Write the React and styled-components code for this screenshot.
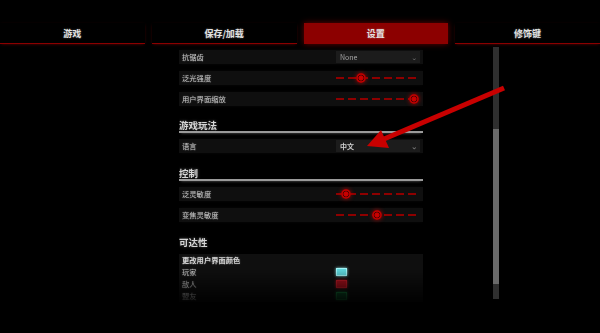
import React from "react";
import styled, { createGlobalStyle } from "styled-components";

const GlobalStyle = createGlobalStyle`
  html, body {
    margin: 0;
    padding: 0;
    background: #000;
  }
  body {
    font-family: "Noto Sans CJK SC", "Noto Sans", sans-serif;
  }
`;

const Screen = styled.div`
  position: relative;
  width: 600px;
  height: 333px;
  background: #000;
  overflow: hidden;
  display: flex;
  flex-direction: column;
`;

const TabBar = styled.div`
  height: 44px;
  box-sizing: border-box;
  padding-top: 23px;
  display: flex;
  gap: 7px;
`;

const Tab = styled.div`
  flex: 1;
  height: 21px;
  display: flex;
  align-items: center;
  justify-content: center;
  font-size: 9px;
  font-weight: 700;
  color: #e2e2e2;
  text-shadow: 0 0 2px rgba(255, 255, 255, 0.35);
  box-sizing: border-box;
  background: ${(p) => (p.$active ? "#8c0000" : "transparent")};
  border-bottom: ${(p) => (p.$active ? "none" : "1px solid #8a0000")};
  box-shadow: ${(p) =>
    p.$active ? "0 0 6px rgba(190, 0, 0, 0.55)" : "0 1px 3px -1px rgba(200,0,0,0.5)"};
`;

const Main = styled.div`
  flex: 1;
  display: flex;
  padding-left: 179px;
  min-height: 0;
`;

const Panel = styled.div`
  width: 244px;
  height: 289px;
  overflow: hidden;
  box-sizing: border-box;
  padding-top: 6px;
  display: flex;
  flex-direction: column;
  -webkit-mask-image: linear-gradient(to bottom, #000 0, #000 225px, transparent 262px);
  mask-image: linear-gradient(to bottom, #000 0, #000 225px, transparent 262px);
`;

const Row = styled.div`
  height: 14px;
  flex-shrink: 0;
  margin-bottom: 7px;
  background: #0f0f0f;
  display: flex;
  align-items: center;
  justify-content: space-between;
  padding: 0 3px;
  box-shadow: 0 0 3px rgba(255, 255, 255, 0.03);
`;

const Label = styled.span`
  font-size: 7.3px;
  color: #c4c4c4;
  text-shadow: 0 0 2px rgba(255, 255, 255, 0.3);
`;

const SectionTitle = styled.div`
  height: 12px;
  flex-shrink: 0;
  margin-top: ${(p) => p.$top}px;
  margin-bottom: 6px;
  font-size: 9.5px;
  font-weight: 700;
  line-height: 12px;
  color: #d6d6d6;
  text-shadow: 0 0 3px rgba(255, 255, 255, 0.35);
  border-bottom: ${(p) => (p.$plain ? "none" : "2px solid #9a9a9a")};
  box-shadow: ${(p) => (p.$plain ? "none" : "0 2px 3px -2px rgba(255,255,255,0.4)")};
`;

const Select = styled.div`
  width: 84px;
  height: 12px;
  box-sizing: border-box;
  background: #1c1c1c;
  display: flex;
  align-items: center;
  justify-content: space-between;
  padding: 0 3px 0 4px;
  font-size: 7px;
  color: ${(p) => (p.$bright ? "#cfcfcf" : "#a8a8a8")};
  font-weight: ${(p) => (p.$bright ? 700 : 400)};
`;

const Caret = styled.span`
  font-size: 6px;
  color: #777;
  transform: scaleX(1.3);
`;

const Slider = styled.div`
  position: relative;
  width: 84px;
  height: 12px;
  display: flex;
  align-items: center;
`;

const Track = styled.div`
  width: 100%;
  height: 2px;
  background: repeating-linear-gradient(
    to right,
    #8e0000 0,
    #8e0000 8px,
    transparent 8px,
    transparent 12px
  );
`;

const Thumb = styled.div`
  position: absolute;
  top: 1px;
  width: 10px;
  height: 10px;
  margin-left: -5px;
  border-radius: 50%;
  background: radial-gradient(
    circle,
    #d00000 0,
    #c00000 2.3px,
    #4a0000 2.8px,
    #5a0000 3.3px,
    #c80000 3.6px,
    #a00000 5px
  );
  box-shadow: 0 0 4px rgba(220, 0, 0, 0.7);
`;

const ColorGroup = styled.div`
  flex-shrink: 0;
  background: #0f0f0f;
  padding: 0 3px;
  display: flex;
  flex-direction: column;
`;

const GroupTitle = styled.div`
  height: 12px;
  line-height: 12px;
  font-size: 7.3px;
  font-weight: 700;
  color: #d2d2d2;
  text-shadow: 0 0 2px rgba(255, 255, 255, 0.35);
`;

const ColorRow = styled.div`
  height: 12px;
  display: flex;
  align-items: center;
  justify-content: space-between;
`;

const SwatchSlot = styled.div`
  width: 84px;
`;

const Swatch = styled.div`
  width: 11px;
  height: 8px;
  box-sizing: border-box;
  background: ${(p) => p.$color};
  border: 1px solid ${(p) => p.$edge};
  box-shadow: 0 0 3px ${(p) => p.$edge};
`;

const Scrollbar = styled.div`
  width: 6px;
  height: 252px;
  margin-left: 70px;
  margin-top: 3px;
  background: #2f2f2f;
  display: flex;
  flex-direction: column;
`;

const ScrollThumb = styled.div`
  margin-top: 82px;
  height: 155px;
  background: #6a6a6a;
`;

const ArrowLayer = styled.svg`
  position: absolute;
  left: 0;
  top: 0;
  pointer-events: none;
`;

const SliderControl = ({ value }) => (
  <Slider>
    <Track />
    <Thumb style={{ left: `${5 + value * 74}px` }} />
  </Slider>
);

const Dropdown = ({ value, bright }) => (
  <Select $bright={bright}>
    <span>{value}</span>
    <Caret>⌄</Caret>
  </Select>
);

const tabs = [
  { name: "游戏" },
  { name: "保存/加载" },
  { name: "设置", active: true },
  { name: "修饰键" },
];

const colors = [
  { name: "玩家", color: "#5fd6dc", edge: "#9ff4f6" },
  { name: "敌人", color: "#a8101c", edge: "#c41a26" },
  { name: "盟友", color: "#0b4f26", edge: "#147a3a" },
];

export default function App() {
  return (
    <>
      <GlobalStyle />
      <Screen>
        <TabBar>
          {tabs.map((t) => (
            <Tab key={t.name} $active={t.active}>
              {t.name}
            </Tab>
          ))}
        </TabBar>
        <Main>
          <Panel>
            <Row>
              <Label>抗锯齿</Label>
              <Dropdown value="None" />
            </Row>
            <Row>
              <Label>泛光强度</Label>
              <SliderControl value={0.27} />
            </Row>
            <Row>
              <Label>用户界面缩放</Label>
              <SliderControl value={0.99} />
            </Row>

            <SectionTitle $top={6}>游戏玩法</SectionTitle>
            <Row>
              <Label>语言</Label>
              <Dropdown value="中文" bright />
            </Row>

            <SectionTitle $top={7}>控制</SectionTitle>
            <Row>
              <Label>泛灵敏度</Label>
              <SliderControl value={0.07} />
            </Row>
            <Row>
              <Label>变焦灵敏度</Label>
              <SliderControl value={0.49} />
            </Row>

            <SectionTitle $top={7} $plain>
              可达性
            </SectionTitle>
            <ColorGroup>
              <GroupTitle>更改用户界面颜色</GroupTitle>
              {colors.map((c) => (
                <ColorRow key={c.name}>
                  <Label>{c.name}</Label>
                  <SwatchSlot>
                    <Swatch $color={c.color} $edge={c.edge} />
                  </SwatchSlot>
                </ColorRow>
              ))}
            </ColorGroup>
          </Panel>
          <Scrollbar>
            <ScrollThumb />
          </Scrollbar>
        </Main>
        <ArrowLayer width="600" height="333" viewBox="0 0 600 333">
          <line
            x1="504"
            y1="88"
            x2="384"
            y2="139"
            stroke="#c80000"
            strokeWidth="5"
          />
          <polygon points="367,146 381,130 389,148" fill="#c80000" />
        </ArrowLayer>
      </Screen>
    </>
  );
}
